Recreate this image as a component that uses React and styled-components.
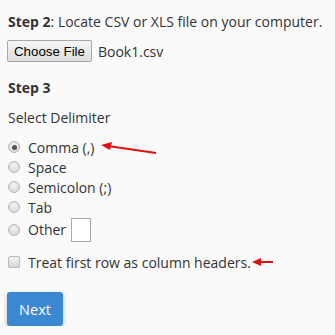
import React from 'react'
import styled, { createGlobalStyle } from 'styled-components'

const Global = createGlobalStyle`
html, body {
  margin: 0;
  background: #fafafa;
}
body {
  font-family: "Open Sans", sans-serif;
  font-size: 14px;
  color: #333;
}
`;

const Page = styled.div`
padding: 12px 8px 0 8px;
display: flex;
flex-direction: column;
`;

const Line = styled.p`
margin: 0;
line-height: 20px;
white-space: nowrap;
`;

const FileRow = styled.div`
display: flex;
align-items: center;
gap: 6px;
margin-top: 8px;
margin-left: -1px;
`;

const FileButton = styled.button`
font-family: "Liberation Sans", Arial, sans-serif;
font-size: 13.3px;
color: #000;
height: 22px;
padding: 0 6px;
border: 1px solid #a9a9a9;
border-radius: 2px;
background: linear-gradient(#f6f6f6, #dedede);
`;

const StepTitle = styled.h4`
margin: 16px 0 0;
font-size: 14px;
font-weight: 700;
line-height: 20px;
`;

const Label = styled.div`
margin-top: 10px;
line-height: 20px;
`;

const Options = styled.div`
display: flex;
flex-direction: column;
margin-top: 9px;
`;

const Option = styled.label`
display: flex;
align-items: center;
height: ${p => (p.$tall ? '25px' : '20px')};
white-space: nowrap;
`;

const Radio = styled.input.attrs({ type: 'radio' })`
appearance: none;
width: 12px;
height: 12px;
margin: 0 8px 0 0;
border-radius: 50%;
border: 1px solid #b8b8b8;
background: radial-gradient(circle at 50% 35%, #f4f4f4, #d2d2d2);
position: relative;
&:checked::after {
  content: '';
  position: absolute;
  left: 2.5px;
  top: 2.5px;
  width: 5px;
  height: 5px;
  border-radius: 50%;
  background: #555;
}
`;

const Check = styled.input.attrs({ type: 'checkbox' })`
appearance: none;
width: 12px;
height: 12px;
margin: 0 8px 0 0;
border-radius: 2px;
border: 1px solid #b8b8b8;
background: linear-gradient(#f4f4f4, #d6d6d6);
`;

const OtherBox = styled.input.attrs({ type: 'text' })`
width: 18px;
height: 22px;
margin-left: 5px;
padding: 0;
border: 1px solid #a9a9a9;
background: #fff;
`;

const HeaderRow = styled(Option)`
margin-top: 10px;
`;

const Arrow = styled.svg`
display: block;
flex: none;
`;

const NextButton = styled.button`
align-self: flex-start;
margin-top: 20px;
margin-left: -1px;
width: 56px;
height: 34px;
border: none;
border-radius: 3px;
background: #3a88d2;
color: #fff;
font-family: "Open Sans", sans-serif;
font-size: 14.5px;
box-shadow: 0 2px 4px rgba(0,0,0,0.25);
`;

const App = () => {
  return (
    <>
      <Global />
      <Page>
        <Line><b>Step 2</b>: Locate CSV or XLS file on your computer.</Line>
        <FileRow>
          <FileButton>Choose File</FileButton>
          <span>Book1.csv</span>
        </FileRow>
        <StepTitle>Step 3</StepTitle>
        <Label>Select Delimiter</Label>
        <Options>
          <Option>
            <Radio name="d" defaultChecked />Comma (,)
            <Arrow width="58" height="14" viewBox="0 0 58 14" style={{ marginLeft: 6, marginTop: 4 }}>
              <line x1="8" y1="4" x2="56" y2="11" stroke="#e01010" strokeWidth="2.2" />
              <polygon points="1,3 12,0 10,8" fill="#e01010" />
            </Arrow>
          </Option>
          <Option><Radio name="d" />Space</Option>
          <Option><Radio name="d" />Semicolon (;)</Option>
          <Option><Radio name="d" />Tab</Option>
          <Option $tall><Radio name="d" />Other<OtherBox /></Option>
        </Options>
        <HeaderRow>
          <Check />Treat first row as column headers.
          <Arrow width="22" height="8" viewBox="0 0 22 8" style={{ marginLeft: 1 }}>
            <line x1="6" y1="4" x2="21" y2="4" stroke="#e01010" strokeWidth="2" />
            <polygon points="0,4 9,0 9,8" fill="#e01010" />
          </Arrow>
        </HeaderRow>
        <NextButton>Next</NextButton>
      </Page>
    </>
  )
}

export default App
